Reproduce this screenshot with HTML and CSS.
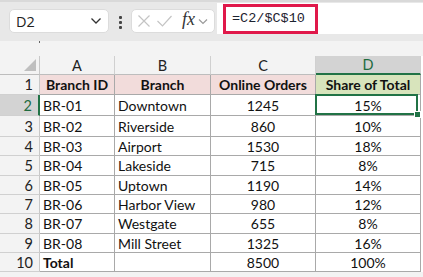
FILE: index.html
```html
<!DOCTYPE html>
<html lang="en">
<head>
    <meta charset="UTF-8">
    <meta name="viewport" content="width=device-width, initial-scale=1.0">
    <title>Share of Total</title>
    <link rel="stylesheet" href="styles.css">
</head>
<body>

    <div class="formula-bar">
        <div class="name-box">
            <span class="name-text">D2</span>
            <svg class="chevron" width="12" height="8" viewBox="0 0 12 8"><path d="M1.5 1.5 L6 6 L10.5 1.5" fill="none" stroke="#333" stroke-width="1.3"/></svg>
        </div>
        <div class="dots"><span></span><span></span><span></span></div>
        <div class="fx-box">
            <svg class="icon" width="14" height="14" viewBox="0 0 14 14"><path d="M1.5 1.5 L12.5 12.5 M12.5 1.5 L1.5 12.5" stroke="#c4c4c4" stroke-width="1.2"/></svg>
            <svg class="icon" width="17" height="14" viewBox="0 0 17 14"><path d="M1.5 7 L6.5 12 L15.5 2" fill="none" stroke="#c4c4c4" stroke-width="1.2"/></svg>
            <span class="fx">fx</span>
            <svg class="small-chevron" width="10" height="7" viewBox="0 0 10 7"><path d="M1 1.5 L5 5.5 L9 1.5" fill="none" stroke="#9a9a9a" stroke-width="1.2"/></svg>
        </div>
        <div class="formula-input">
            <span class="formula-text">=C2/$C$10</span>
        </div>
    </div>

    <div class="spacer"><div class="tick"></div></div>

    <div class="sheet">
        <div class="corner"><span class="corner-tri"></span></div>
        <div class="col-head">A</div>
        <div class="col-head">B</div>
        <div class="col-head">C</div>
        <div class="col-head active">D</div>

        <div class="row-head">1</div>
        <div class="cell head pink">Branch ID</div>
        <div class="cell head pink">Branch</div>
        <div class="cell head pink">Online Orders</div>
        <div class="cell head green">Share of Total</div>

        <div class="row-head active">2</div>
        <div class="cell">BR-01</div>
        <div class="cell">Downtown</div>
        <div class="cell num">1245</div>
        <div class="cell num selected">15%</div>

        <div class="row-head">3</div>
        <div class="cell">BR-02</div>
        <div class="cell">Riverside</div>
        <div class="cell num">860</div>
        <div class="cell num">10%</div>

        <div class="row-head">4</div>
        <div class="cell">BR-03</div>
        <div class="cell">Airport</div>
        <div class="cell num">1530</div>
        <div class="cell num">18%</div>

        <div class="row-head">5</div>
        <div class="cell">BR-04</div>
        <div class="cell">Lakeside</div>
        <div class="cell num">715</div>
        <div class="cell num">8%</div>

        <div class="row-head">6</div>
        <div class="cell">BR-05</div>
        <div class="cell">Uptown</div>
        <div class="cell num">1190</div>
        <div class="cell num">14%</div>

        <div class="row-head">7</div>
        <div class="cell">BR-06</div>
        <div class="cell">Harbor View</div>
        <div class="cell num">980</div>
        <div class="cell num">12%</div>

        <div class="row-head">8</div>
        <div class="cell">BR-07</div>
        <div class="cell">Westgate</div>
        <div class="cell num">655</div>
        <div class="cell num">8%</div>

        <div class="row-head">9</div>
        <div class="cell">BR-08</div>
        <div class="cell">Mill Street</div>
        <div class="cell num">1325</div>
        <div class="cell num">16%</div>

        <div class="row-head">10</div>
        <div class="cell bold">Total</div>
        <div class="cell"></div>
        <div class="cell num">8500</div>
        <div class="cell num">100%</div>
    </div>

</body>
</html>
```

FILE: styles.css
```css
body {
    margin: 0;
    width: 423px;
    height: 277px;
    overflow: hidden;
    background-color: #f3f3f3;
    font-family: 'Lato', 'Liberation Sans', sans-serif;
    color: #111;
}

/* formula bar */
.formula-bar {
    height: 41px;
    box-sizing: border-box;
    background-color: #e8e8e8;
    border-top: 2px solid #d9d9d9;
    display: flex;
    align-items: flex-start;
}

.name-box {
    margin: 7px 0 0 9px;
    width: 100px;
    height: 24px;
    box-sizing: border-box;
    background-color: #fff;
    border: 1px solid #dcdcdc;
    border-radius: 5px;
    display: flex;
    align-items: center;
    justify-content: space-between;
    padding: 0 6px 0 6px;
}

.name-text {
    font-family: 'Open Sans', sans-serif;
    font-size: 14.5px;
    color: #222;
}

.dots {
    width: 22px;
    margin-top: 14px;
    display: flex;
    flex-direction: column;
    align-items: center;
    gap: 2px;
}

.dots span {
    width: 3px;
    height: 3px;
    background-color: #444;
    border-radius: 1px;
}

.fx-box {
    margin-top: 7px;
    width: 84px;
    height: 24px;
    box-sizing: border-box;
    background-color: #fff;
    border: 1px solid #dcdcdc;
    border-radius: 5px;
    display: flex;
    align-items: center;
    padding-left: 5px;
    gap: 5px;
}

.fx {
    font-family: 'Liberation Serif', serif;
    font-style: italic;
    font-size: 18px;
    color: #333;
    margin-left: 4px;
    margin-top: -3px;
}

.small-chevron {
    margin-left: -2px;
}

.formula-input {
    margin-top: 1px;
    margin-left: 2px;
    flex: 1;
    height: 31px;
    background-color: #fff;
    padding-left: 6px;
    display: flex;
    align-items: center;
}

.formula-text {
    height: 30px;
    box-sizing: border-box;
    border: 3px solid #e0184a;
    padding: 0 10px 0 6px;
    display: flex;
    align-items: center;
    font-family: 'Liberation Mono', monospace;
    font-size: 13.5px;
    color: #1c2230;
}

.spacer {
    height: 15px;
}

.tick {
    width: 40px;
    height: 2px;
    box-sizing: border-box;
    border-right: 1px solid #666;
}

/* sheet grid */
.sheet {
    display: grid;
    grid-template-columns: 40px 75px 96px 105px 105px;
    grid-template-rows: 19px 20px 21px 21px 19px 20px 19px 19px 20px 19px 19px;
    background-color: #fff;
}

.corner,
.col-head,
.row-head {
    background-color: #f3f3f3;
    box-sizing: border-box;
    font-size: 14.5px;
    color: #222;
}

.corner {
    border-right: 1px solid #c8c8c8;
    border-bottom: 1px solid #bdbdbd;
    display: flex;
    align-items: flex-end;
    justify-content: flex-end;
    padding: 0 3px 3px 0;
}

.corner-tri {
    width: 0;
    height: 0;
    border-left: 12px solid transparent;
    border-bottom: 12px solid #bfbfbf;
}

.col-head {
    border-right: 1px solid #d0d0d0;
    border-bottom: 1px solid #bdbdbd;
    display: flex;
    align-items: center;
    justify-content: center;
}

.col-head.active {
    background-color: #d3d3d3;
    color: #1e6b3f;
    border-bottom: 2px solid #217346;
}

.row-head {
    border-right: 1px solid #c8c8c8;
    border-bottom: 1px solid #d0d0d0;
    display: flex;
    align-items: center;
    justify-content: flex-end;
    padding-right: 6px;
}

.row-head.active {
    background-color: #d3d3d3;
    color: #1e6b3f;
    border-right: 2px solid #217346;
}

.cell {
    box-sizing: border-box;
    border-right: 1px solid #a9a9a9;
    border-bottom: 1px solid #a9a9a9;
    display: flex;
    align-items: center;
    padding-left: 3px;
    font-size: 14px;
    white-space: nowrap;
}

.cell.num {
    justify-content: center;
    padding-left: 0;
}

.cell.head {
    justify-content: center;
    padding-left: 0;
    font-weight: bold;
}

.cell.bold {
    font-weight: bold;
}

.cell.pink {
    background-color: #f2dcdb;
}

.cell.green {
    background-color: #d8e4bc;
}

.cell.selected {
    position: relative;
}

.cell.selected::before {
    content: "";
    position: absolute;
    left: -1px;
    top: -1px;
    right: 2px;
    bottom: 0;
    border: 2px solid #217346;
}

.cell.selected::after {
    content: "";
    position: absolute;
    right: -1px;
    bottom: -3px;
    width: 5px;
    height: 5px;
    background-color: #217346;
    border: 1px solid #fff;
}
```
